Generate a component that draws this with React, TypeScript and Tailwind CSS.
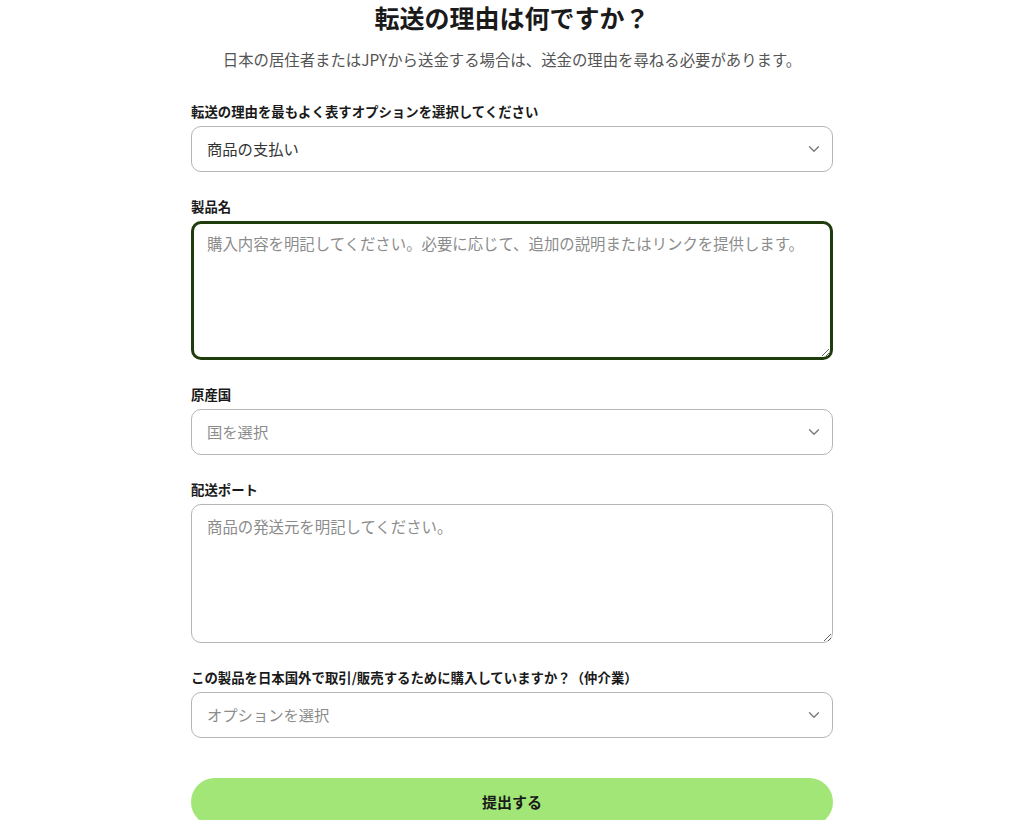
import { ChevronDown } from "lucide-react";

const font = { fontFamily: '"Noto Sans CJK JP", "Noto Sans", sans-serif' };

function Label({ children }: { children: React.ReactNode }) {
  return <p className="text-[13.4px] leading-5 font-bold text-[#1a1a1a] mb-[5px]">{children}</p>;
}

function Select({ value, placeholder }: { value?: string; placeholder: string }) {
  return (
    <div className="relative">
      <select
        defaultValue={value ?? ""}
        className={`w-full h-[46px] appearance-none rounded-[10px] border border-[#b5b5b5] bg-white pl-[15px] pr-10 pb-[2px] text-[15.3px] outline-none ${value ? "text-[#333]" : "text-[#8c8c8c]"}`}
        style={font}
      >
        <option value="" disabled>{placeholder}</option>
        {value && <option value={value}>{value}</option>}
      </select>
      <ChevronDown className="absolute right-[10px] top-1/2 -translate-y-1/2 w-[18px] h-[18px] text-[#7a7a7a] pointer-events-none" strokeWidth={1.8} />
    </div>
  );
}

export default function App() {
  return (
    <div className="min-h-screen bg-white" style={font}>
      <div className="w-[642px] mx-auto">
        <h1 className="text-center text-[25px] leading-[34px] font-bold text-[#1a1a1a]">転送の理由は何ですか？</h1>
        <p className="text-center text-[15.4px] leading-6 text-[#555] mt-[13px]">
          日本の居住者またはJPYから送金する場合は、送金の理由を尋ねる必要があります。
        </p>

        <div className="mt-[30px] flex flex-col gap-6">
          <div>
            <Label>転送の理由を最もよく表すオプションを選択してください</Label>
            <Select value="商品の支払い" placeholder="オプションを選択" />
          </div>

          <div>
            <Label>製品名</Label>
            <textarea
              className="block w-full h-[139px] rounded-[10px] border-[3px] border-[#1f3d0c] bg-white px-[13px] py-[7px] text-[15.4px] leading-6 text-[#333] placeholder:text-[#8c8c8c] outline-none"
              style={font}
              placeholder="購入内容を明記してください。必要に応じて、追加の説明またはリンクを提供します。"
            />
          </div>

          <div>
            <Label>原産国</Label>
            <Select placeholder="国を選択" />
          </div>

          <div>
            <Label>配送ポート</Label>
            <textarea
              className="block w-full h-[139px] rounded-[10px] border border-[#b5b5b5] bg-white px-[15px] py-[9px] text-[15.4px] leading-6 text-[#333] placeholder:text-[#8c8c8c] outline-none"
              style={font}
              placeholder="商品の発送元を明記してください。"
            />
          </div>

          <div>
            <Label>この製品を日本国外で取引/販売するために購入していますか？（仲介業）</Label>
            <Select placeholder="オプションを選択" />
          </div>
        </div>

        <button
          className="mt-10 w-full h-12 rounded-full bg-[#a1e676] text-[15px] font-bold text-[#1a1a1a]"
          style={font}
        >
          提出する
        </button>
      </div>
    </div>
  );
}
